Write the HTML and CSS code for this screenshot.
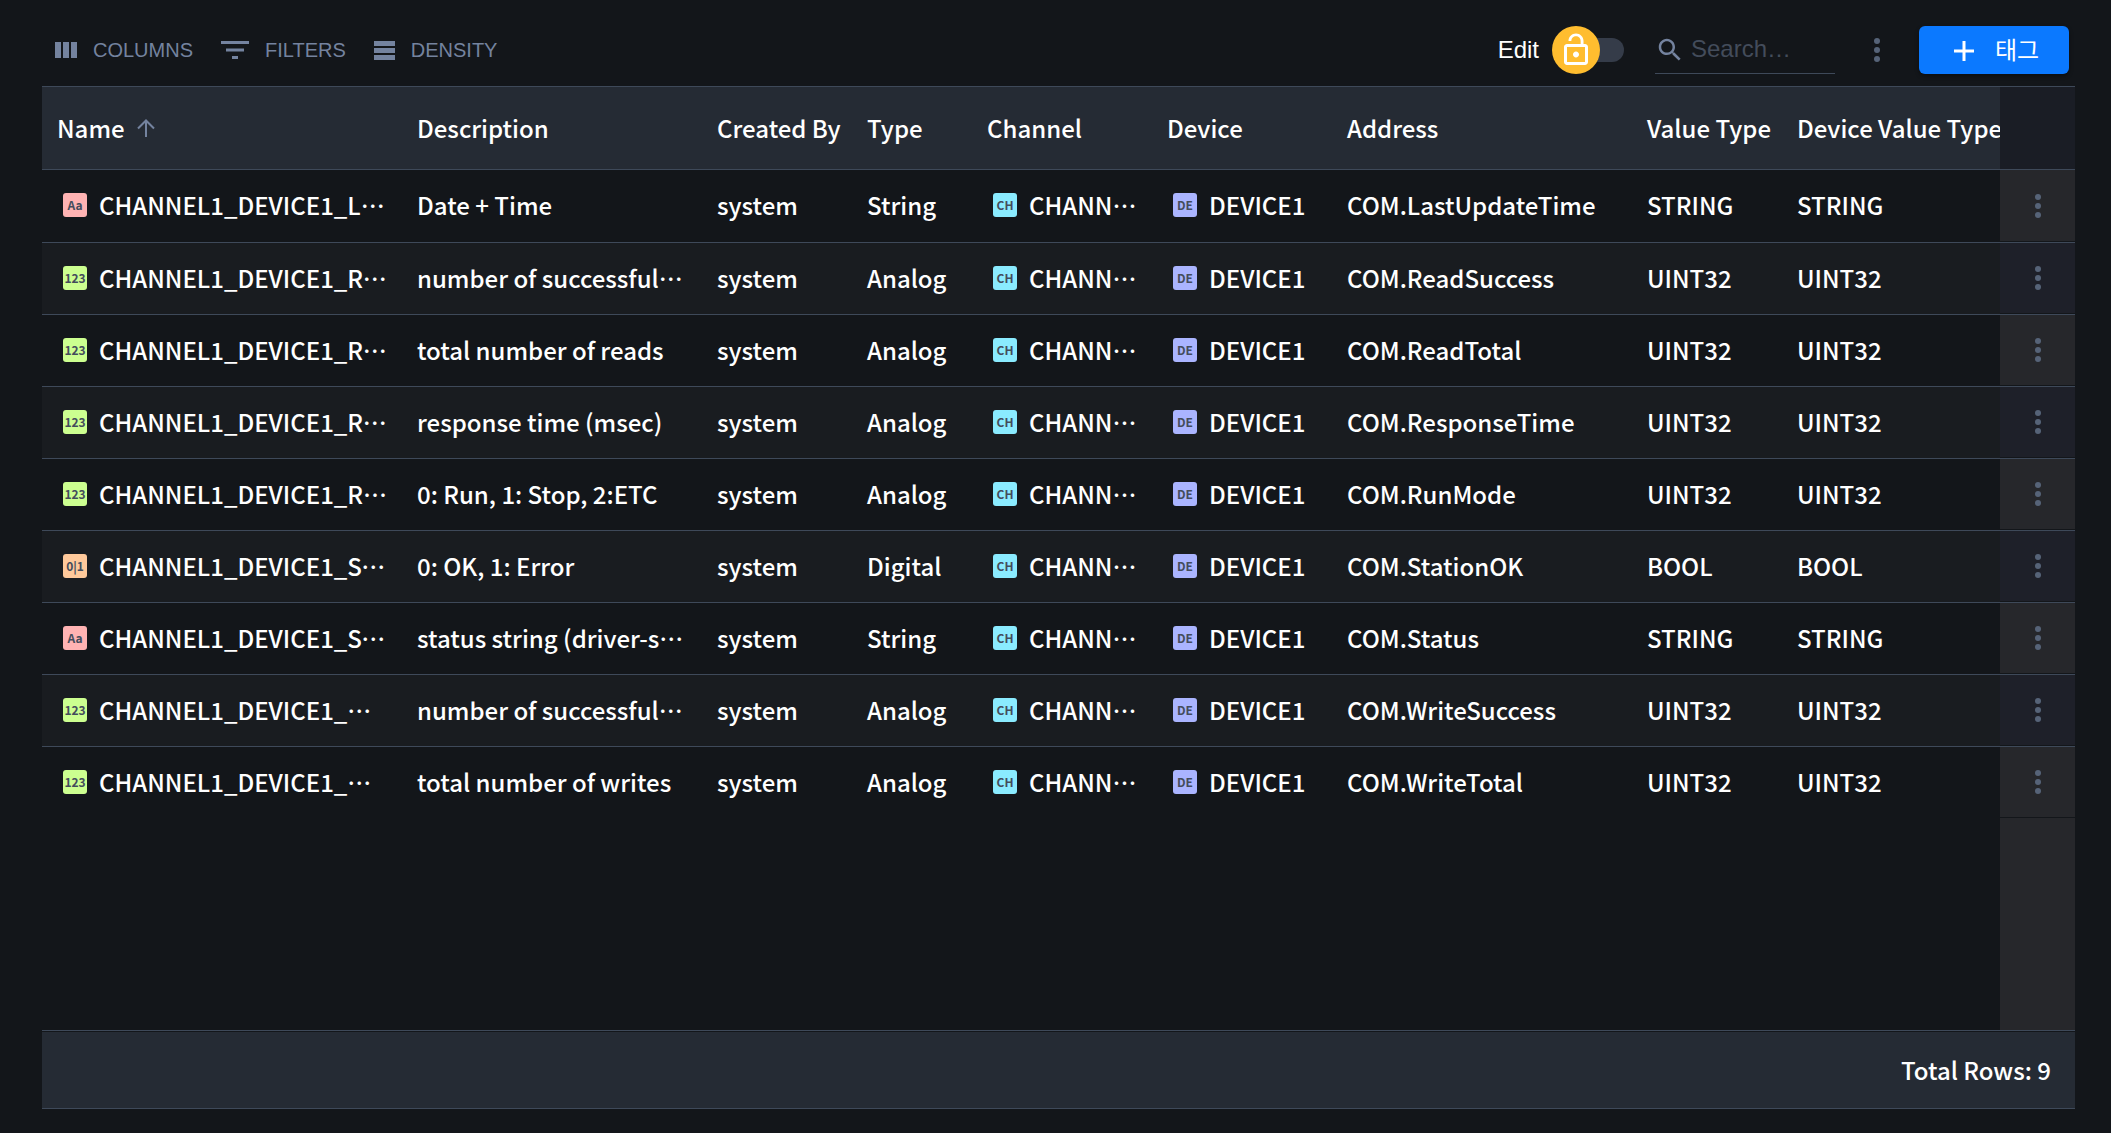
FILE: index.html
```html
<!DOCTYPE html>
<html lang="en">
<head>
<meta charset="utf-8">
<title>Tags</title>
<link rel="stylesheet" href="styles.css">
</head>
<body>
<svg class="sprite" aria-hidden="true">
  <symbol id="kebab" viewBox="0 0 6 24"><circle cx="3" cy="3" r="3"/><circle cx="3" cy="12" r="3"/><circle cx="3" cy="21" r="3"/></symbol>
</svg>
<main class="page">
  <header class="toolbar">
    <div class="tools">
      <button class="tool" type="button"><svg width="22" height="16" viewBox="0 0 22 16"><path d="M0 0h6v16H0zM8 0h6v16H8zM16 0h6v16h-6z"/></svg>COLUMNS</button>
      <button class="tool" type="button"><svg width="28" height="18" viewBox="0 0 28 18"><path d="M0 0h28v3H0zM5 7.500h18v3H5zM11 15h6v3h-6z"/></svg>FILTERS</button>
      <button class="tool" type="button"><svg width="21" height="19" viewBox="0 0 21 19"><path d="M0 0h21v5H0zM0 7h21v5H0zM0 14h21v5H0z"/></svg>DENSITY</button>
    </div>
    <div class="controls">
      <label class="edit" for="edit">Edit</label>
      <span class="switch">
        <input id="edit" type="checkbox" role="switch">
        <span class="thumb"><svg width="36" height="36" viewBox="0 0 24 24" fill="#fff"><path d="M12 17c1.100 0 2-.9 2-2s-.9-2-2-2-2 .9-2 2 .9 2 2 2zm6-9h-1V6c0-2.760-2.240-5-5-5S7 3.240 7 6h1.900c0-1.710 1.390-3.100 3.100-3.100 1.710 0 3.100 1.390 3.100 3.100v2H6c-1.100 0-2 .9-2 2v10c0 1.100.9 2 2 2h12c1.100 0 2-.9 2-2V10c0-1.100-.9-2-2-2zm0 12H6V10h12v10z"/></svg></span>
      </span>
      <label class="search"><svg width="30" height="30" viewBox="0 0 24 24"><path d="M15.500 14h-.79l-.28-.27C15.410 12.590 16 11.110 16 9.500 16 5.910 13.090 3 9.500 3S3 5.910 3 9.500 5.910 16 9.500 16c1.610 0 3.090-.59 4.230-1.570l.27.28v.79l5 4.990L20.490 19l-4.990-5zm-6 0C7.010 14 5 11.990 5 9.500S7.010 5 9.500 5 14 7.010 14 9.500 11.990 14 9.500 14z"/></svg><input type="text" placeholder="Search…" aria-label="Search"></label>
      <button class="more" type="button" aria-label="More"><svg width="6" height="24"><use href="#kebab"/></svg></button>
      <button class="add" type="button"><svg width="22" height="22" viewBox="0 0 22 22"><path d="M11 1v20M1 11h20"/></svg><span lang="ko">태그</span></button>
    </div>
  </header>
  <section class="grid">
    <table>
      <colgroup><col class="c-name"><col class="c-wide"><col class="c-mid"><col class="c-type"><col class="c-ref"><col class="c-ref"><col class="c-wide"><col class="c-mid"><col><col class="c-action"></colgroup>
      <thead>
        <tr><th><span class="sort">Name<svg width="18" height="18" viewBox="0 0 18 18"><path d="M9 18V1.500M1 9.500l8-8 8 8"/></svg></span></th><th>Description</th><th>Created By</th><th>Type</th><th>Channel</th><th>Device</th><th>Address</th><th>Value Type</th><th>Device Value Type</th><th class="action"></th></tr>
      </thead>
      <tbody>
        <tr><td><div class="item"><span class="badge string">Aa</span><span class="label">CHANNEL1_DEVICE1_LastUpdateTime</span></div></td><td>Date + Time</td><td>system</td><td>String</td><td><div class="item"><span class="badge channel">CH</span><span class="label">CHANNEL1</span></div></td><td><div class="item"><span class="badge device">DE</span><span class="label">DEVICE1</span></div></td><td>COM.LastUpdateTime</td><td>STRING</td><td>STRING</td><td class="action"><button class="more" type="button" aria-label="Row menu"><svg width="6" height="24"><use href="#kebab"/></svg></button></td></tr>
        <tr><td><div class="item"><span class="badge analog">123</span><span class="label">CHANNEL1_DEVICE1_ReadSuccess</span></div></td><td>number of successful reads</td><td>system</td><td>Analog</td><td><div class="item"><span class="badge channel">CH</span><span class="label">CHANNEL1</span></div></td><td><div class="item"><span class="badge device">DE</span><span class="label">DEVICE1</span></div></td><td>COM.ReadSuccess</td><td>UINT32</td><td>UINT32</td><td class="action"><button class="more" type="button" aria-label="Row menu"><svg width="6" height="24"><use href="#kebab"/></svg></button></td></tr>
        <tr><td><div class="item"><span class="badge analog">123</span><span class="label">CHANNEL1_DEVICE1_ReadTotal</span></div></td><td>total number of reads</td><td>system</td><td>Analog</td><td><div class="item"><span class="badge channel">CH</span><span class="label">CHANNEL1</span></div></td><td><div class="item"><span class="badge device">DE</span><span class="label">DEVICE1</span></div></td><td>COM.ReadTotal</td><td>UINT32</td><td>UINT32</td><td class="action"><button class="more" type="button" aria-label="Row menu"><svg width="6" height="24"><use href="#kebab"/></svg></button></td></tr>
        <tr><td><div class="item"><span class="badge analog">123</span><span class="label">CHANNEL1_DEVICE1_ResponseTime</span></div></td><td>response time (msec)</td><td>system</td><td>Analog</td><td><div class="item"><span class="badge channel">CH</span><span class="label">CHANNEL1</span></div></td><td><div class="item"><span class="badge device">DE</span><span class="label">DEVICE1</span></div></td><td>COM.ResponseTime</td><td>UINT32</td><td>UINT32</td><td class="action"><button class="more" type="button" aria-label="Row menu"><svg width="6" height="24"><use href="#kebab"/></svg></button></td></tr>
        <tr><td><div class="item"><span class="badge analog">123</span><span class="label">CHANNEL1_DEVICE1_RunMode</span></div></td><td>0: Run, 1: Stop, 2:ETC</td><td>system</td><td>Analog</td><td><div class="item"><span class="badge channel">CH</span><span class="label">CHANNEL1</span></div></td><td><div class="item"><span class="badge device">DE</span><span class="label">DEVICE1</span></div></td><td>COM.RunMode</td><td>UINT32</td><td>UINT32</td><td class="action"><button class="more" type="button" aria-label="Row menu"><svg width="6" height="24"><use href="#kebab"/></svg></button></td></tr>
        <tr><td><div class="item"><span class="badge digital">0|1</span><span class="label">CHANNEL1_DEVICE1_StationOK</span></div></td><td>0: OK, 1: Error</td><td>system</td><td>Digital</td><td><div class="item"><span class="badge channel">CH</span><span class="label">CHANNEL1</span></div></td><td><div class="item"><span class="badge device">DE</span><span class="label">DEVICE1</span></div></td><td>COM.StationOK</td><td>BOOL</td><td>BOOL</td><td class="action"><button class="more" type="button" aria-label="Row menu"><svg width="6" height="24"><use href="#kebab"/></svg></button></td></tr>
        <tr><td><div class="item"><span class="badge string">Aa</span><span class="label">CHANNEL1_DEVICE1_Status</span></div></td><td>status string (driver-specific)</td><td>system</td><td>String</td><td><div class="item"><span class="badge channel">CH</span><span class="label">CHANNEL1</span></div></td><td><div class="item"><span class="badge device">DE</span><span class="label">DEVICE1</span></div></td><td>COM.Status</td><td>STRING</td><td>STRING</td><td class="action"><button class="more" type="button" aria-label="Row menu"><svg width="6" height="24"><use href="#kebab"/></svg></button></td></tr>
        <tr><td><div class="item"><span class="badge analog">123</span><span class="label">CHANNEL1_DEVICE1_WriteSuccess</span></div></td><td>number of successful writes</td><td>system</td><td>Analog</td><td><div class="item"><span class="badge channel">CH</span><span class="label">CHANNEL1</span></div></td><td><div class="item"><span class="badge device">DE</span><span class="label">DEVICE1</span></div></td><td>COM.WriteSuccess</td><td>UINT32</td><td>UINT32</td><td class="action"><button class="more" type="button" aria-label="Row menu"><svg width="6" height="24"><use href="#kebab"/></svg></button></td></tr>
        <tr><td><div class="item"><span class="badge analog">123</span><span class="label">CHANNEL1_DEVICE1_WriteTotal</span></div></td><td>total number of writes</td><td>system</td><td>Analog</td><td><div class="item"><span class="badge channel">CH</span><span class="label">CHANNEL1</span></div></td><td><div class="item"><span class="badge device">DE</span><span class="label">DEVICE1</span></div></td><td>COM.WriteTotal</td><td>UINT32</td><td>UINT32</td><td class="action"><button class="more" type="button" aria-label="Row menu"><svg width="6" height="24"><use href="#kebab"/></svg></button></td></tr>
      </tbody>
    </table>
    <div class="filler"></div>
    <footer class="summary">Total Rows: 9</footer>
  </section>
</main>
</body>
</html>
```
FILE: styles.css
```css
:root {
  --bg: #13161a;
  --stripe: #191c20;
  --panel: #252b34;
  --line: #3e4959;
  --muted: #74839f;
  --faint: #566378;
  --pinned: #26272b;
  --action-width: 75px;
}

* { box-sizing: border-box; }

body {
  margin: 0;
  background: var(--bg);
  color: #fff;
  font: 500 24px/36px "Noto Sans CJK JP", "Noto Sans CJK KR", sans-serif;
}

button, input { font: inherit; color: inherit; }
button { border: 0; padding: 0; background: none; cursor: pointer; }
svg { display: block; flex: none; }
.sprite { position: absolute; width: 0; height: 0; }

.page {
  display: flex;
  flex-direction: column;
  min-height: 100vh;
  padding: 14px 36px 24px 42px;
}

/* Toolbar */
.toolbar {
  display: flex;
  justify-content: space-between;
  align-items: center;
  height: 72px;
  padding: 0 6px 0 13px;
  font-family: "Liberation Sans", "Noto Sans CJK KR", sans-serif;
  font-weight: 400;
}
.tools { display: flex; gap: 28px; }
.tool {
  display: flex;
  align-items: center;
  gap: 16px;
  color: var(--muted);
  font-size: 20px;
}
.tool svg { fill: currentColor; }
.controls { display: flex; align-items: center; }
.edit { margin-right: 13px; }

.switch { position: relative; width: 72px; height: 48px; display: flex; align-items: center; justify-content: flex-end; }
.switch input {
  appearance: none;
  width: 60px;
  height: 24px;
  margin: 0;
  border-radius: 12px;
  background: #353c49;
}
.thumb {
  position: absolute;
  inset: 0 auto 0 0;
  display: grid;
  place-items: center;
  width: 48px;
  border-radius: 50%;
  background: #ffbd2f;
  pointer-events: none;
}

.search {
  display: flex;
  align-items: center;
  gap: 6px;
  width: 180px;
  height: 48px;
  margin: 0 39px 0 31px;
  border-bottom: 1px solid var(--line);
}
.search svg { fill: var(--muted); }
.search input { flex: 1; min-width: 0; padding: 0 0 2px; border: 0; outline: 0; background: none; }
.search input::placeholder { color: #434c5b; opacity: 1; }

.more { display: inline-grid; place-items: center; }
.more svg { fill: var(--faint); }

.add {
  display: flex;
  align-items: center;
  gap: 20px;
  width: 150px;
  height: 48px;
  padding: 2px 0 0 34px;
  margin-left: 39px;
  border-radius: 6px;
  background: #0b79ff;
  box-shadow: 0 2px 4px rgba(0, 0, 0, .4);
}
.add svg { fill: none; stroke: #fff; stroke-width: 3; }

/* Data grid */
.grid {
  flex: 1;
  display: flex;
  flex-direction: column;
  border: solid var(--line);
  border-width: 1px 0;
}
table { width: 100%; table-layout: fixed; border-collapse: separate; border-spacing: 0; }
.c-name { width: 360px; }
.c-wide { width: 300px; }
.c-mid { width: 150px; }
.c-type { width: 120px; }
.c-ref { width: 180px; }
.c-action { width: var(--action-width); }

th, td {
  padding: 0 15px;
  overflow: hidden;
  text-align: left;
  white-space: nowrap;
  text-overflow: ellipsis;
}
th {
  height: 83px;
  padding-right: 0;
  background: var(--panel);
  border-bottom: 1px solid var(--line);
  font-weight: 500;
  text-overflow: clip;
}
td { height: 72px; padding-bottom: 2px; }
tr + tr td { border-top: 1px solid var(--line); }
tbody tr:nth-child(even) { background: var(--stripe); }

.sort { display: flex; align-items: center; gap: 12px; }
.sort svg { fill: none; stroke: var(--muted); stroke-width: 2; }

.action { padding: 0; text-align: center; background: var(--pinned); }
th.action { background: #1a1d25; }
tr:nth-child(even) .action { background: #1e2029; }
td.action { border-bottom: 1px solid var(--bg); }
td.action .more { width: 76px; height: 48px; vertical-align: middle; }

.item { display: flex; align-items: center; gap: 12px; margin-right: -3px; padding-left: 6px; }
.label { overflow: hidden; text-overflow: ellipsis; }
.badge {
  flex: none;
  width: 24px;
  height: 24px;
  border-radius: 3px;
  color: #444c5c;
  font-size: 12px;
  font-weight: 700;
  line-height: 24px;
  text-align: center;
}
.string { background: #ffb3b3; }
.analog { background: #ccff90; }
.digital { background: #ffc99b; }
.channel { background: #8aebff; }
.device { background: #aab4ff; }

.filler { flex: 1; display: flex; justify-content: flex-end; }
.filler::after { content: ""; width: var(--action-width); background: var(--pinned); }

.summary {
  height: 78px;
  padding: 21px 24px 20px;
  border-top: 1px solid var(--line);
  background: var(--panel);
  box-shadow: inset 0 1px var(--bg);
  text-align: right;
}
```
